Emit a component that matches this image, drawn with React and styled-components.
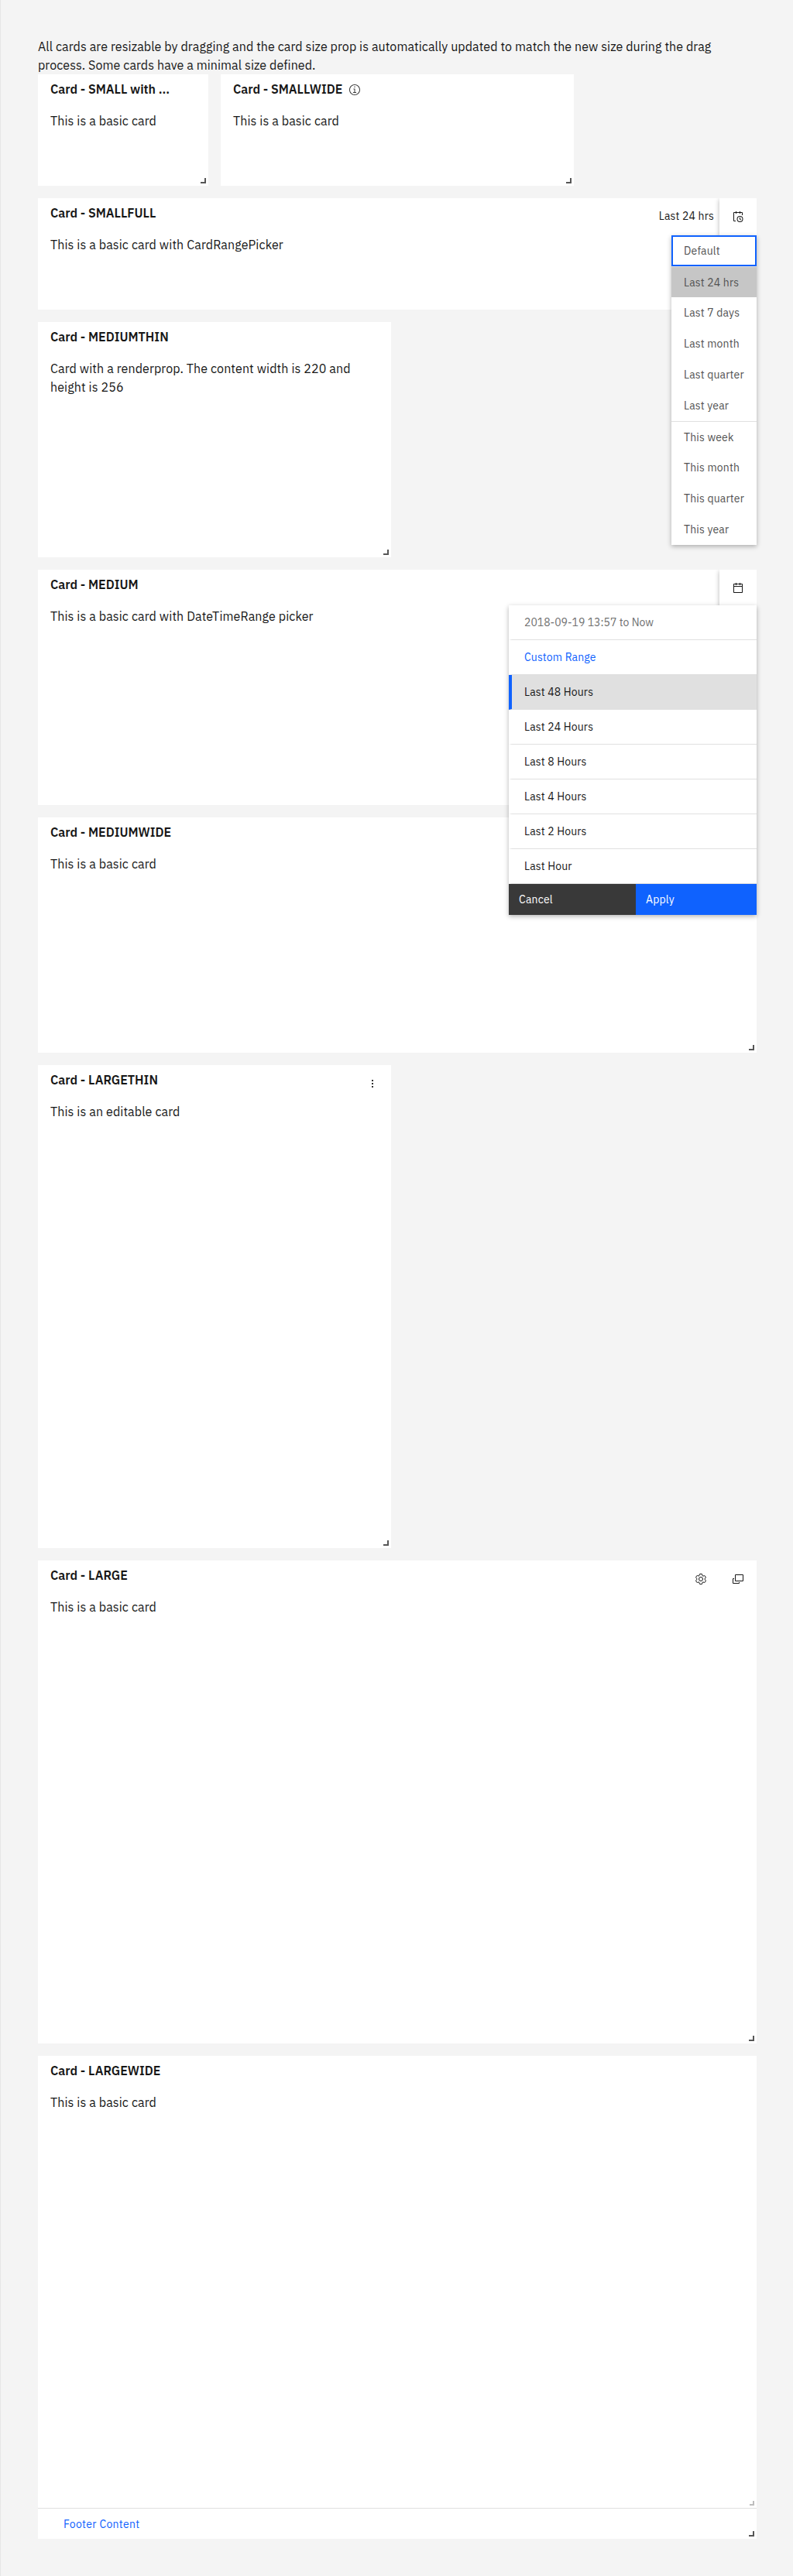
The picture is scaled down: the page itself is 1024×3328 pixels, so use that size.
import React from 'react';
import styled, { createGlobalStyle } from 'styled-components';

const GlobalStyle = createGlobalStyle`
  *, *::before, *::after { box-sizing: border-box; }
  body {
    margin: 0;
    background: #f4f4f4;
    color: #161616;
    font-family: "IBM Plex Sans", Roboto, "Liberation Sans", sans-serif;
    font-size: 16px;
    line-height: 24px;
  }
`;

const Page = styled.main`
  min-height: 3328px;
  padding: 48px 47px 48px 48px;
  border-left: 1px solid #e6e6e6;
`;

const Intro = styled.p`
  height: 48px;
  margin: 0;
`;

const IntroLine = styled.span`
  display: block;
  white-space: nowrap;
  letter-spacing: 0.083px;
`;

const Board = styled.div`
  display: flex;
  flex-wrap: wrap;
  gap: 16px;
`;

const CardBox = styled.section`
  position: relative;
  display: flex;
  flex-direction: column;
  width: ${(p) => p.$width}px;
  height: ${(p) => p.$height}px;
  background: #fff;
`;

const CardHeader = styled.header`
  display: flex;
  flex: none;
  justify-content: space-between;
  height: 48px;
  padding-left: 16px;
`;

const Title = styled.h2`
  display: flex;
  align-items: center;
  gap: 8px;
  height: 38px;
  margin: 0;
  font-size: 16px;
  font-weight: 600;
  white-space: nowrap;

  svg { margin-top: 2px; }
`;

const CardBody = styled.div`
  flex: 1;
  padding: 0 16px 16px;
  letter-spacing: 0.11px;
`;

const CardFooter = styled.footer`
  display: flex;
  align-items: center;
  height: 40px;
  padding: 1px 33px 0;
  border-top: 1px solid #e0e0e0;
`;

const FooterLink = styled.a`
  color: #0f62fe;
  font-size: 14px;
  letter-spacing: 0.32px;
`;

const Toolbar = styled.div`
  display: flex;
  align-items: center;
`;

const RangeLabel = styled.span`
  margin-right: 7px;
  padding-bottom: 2px;
  font-size: 14px;
  letter-spacing: 0.16px;
`;

const ToolButton = styled.button`
  display: flex;
  align-items: center;
  justify-content: center;
  width: 48px;
  height: 48px;
  padding: 0;
  border: 0;
  background: #fff;
  color: #161616;
  box-shadow: ${(p) => (p.$open ? '0 2px 6px rgba(0, 0, 0, 0.3)' : 'none')};
  clip-path: ${(p) => (p.$open ? 'inset(0 0 0 -8px)' : 'none')};
`;

const ResizeHandle = styled.span`
  position: absolute;
  right: 3px;
  bottom: ${(p) => p.$bottom || 3}px;
  width: ${(p) => (p.$faint ? 6 : 7)}px;
  height: ${(p) => (p.$faint ? 6 : 7)}px;
  border: solid ${(p) => (p.$faint ? '#bdbdbd' : '#565656')};
  border-width: 0 2px 2px 0;
`;

const Menu = styled.ul`
  position: absolute;
  z-index: 2;
  top: 48px;
  right: 0;
  width: 110px;
  margin: 0;
  padding: 0;
  list-style: none;
  background: #fff;
  box-shadow: 0 2px 6px rgba(0, 0, 0, 0.3);
`;

const MenuItem = styled.li`
  display: flex;
  align-items: center;
  height: 40px;
  padding-left: ${(p) => (p.$focused ? 14 : 16)}px;
  border: ${(p) => (p.$focused ? '2px solid #0f62fe' : '0')};
  border-top: ${(p) => (p.$divided ? '1px solid #e0e0e0' : p.$focused ? '2px solid #0f62fe' : '0')};
  background: ${(p) => (p.$selected ? '#c6c6c6' : '#fff')};
  color: #525252;
  font-size: 14px;
  letter-spacing: 0.16px;
  white-space: nowrap;
`;

const RangePanel = styled.div`
  position: absolute;
  z-index: 2;
  top: 46px;
  right: 0;
  width: 320px;
  background: #fff;
  box-shadow: 0 2px 6px rgba(0, 0, 0, 0.3);
`;

const RangeOption = styled.div`
  display: flex;
  align-items: center;
  height: 45px;
  padding-left: 16px;
  border-left: 4px solid ${(p) => (p.$selected ? '#0f62fe' : 'transparent')};
  border-bottom: 1px solid #e0e0e0;
  background: ${(p) => (p.$selected ? '#e0e0e0' : '#fff')};
  color: ${(p) => p.$color || '#161616'};
  font-size: 14px;
  letter-spacing: ${(p) => p.$tracking ?? 0.15}px;
`;

const PanelActions = styled.div`
  display: flex;
  height: 40px;
`;

const PanelButton = styled.button`
  flex: ${(p) => (p.$primary ? '1' : '0 0 164px')};
  padding: 0 13px;
  border: 0;
  background: ${(p) => (p.$primary ? '#0f62fe' : '#393939')};
  color: #fff;
  font: 14px/18px "IBM Plex Sans", Roboto, sans-serif;
  letter-spacing: 0.2px;
  text-align: left;
`;

const InfoIcon = () => (
  <svg width="16" height="16" viewBox="0 0 16 16" fill="#393939">
    <path d="M8.5 11V6.5h-2v1h1V11H6v1h4v-1zM8 3.5c-.4 0-.8.3-.8.8S7.6 5 8 5s.8-.3.8-.8-.4-.7-.8-.7z" />
    <path d="M8 15c-3.9 0-7-3.1-7-7s3.1-7 7-7 7 3.1 7 7-3.1 7-7 7zM8 2C4.7 2 2 4.7 2 8s2.7 6 6 6 6-2.7 6-6-2.7-6-6-6z" />
  </svg>
);

const ScheduleIcon = () => (
  <svg width="16" height="16" viewBox="0 0 32 32" fill="currentColor">
    <path d="M21,30a8,8,0,1,1,8-8A8,8,0,0,1,21,30Zm0-14a6,6,0,1,0,6,6A6,6,0,0,0,21,16Z" />
    <path d="M22.59 25L20 22.41V18h2v3.59l2 2z" />
    <path d="M28,6a2,2,0,0,0-2-2H22V2H20V4H12V2H10V4H6A2,2,0,0,0,4,6V26a2,2,0,0,0,2,2h4V26H6V6h4V8h2V6h8V8h2V6h4v6h2Z" />
  </svg>
);

const CalendarIcon = () => (
  <svg width="16" height="16" viewBox="0 0 32 32" fill="currentColor">
    <path d="M26,4h-4V2h-2v2h-8V2h-2v2H6C4.9,4,4,4.9,4,6v20c0,1.1,0.9,2,2,2h20c1.1,0,2-0.9,2-2V6C28,4.9,27.1,4,26,4z M26,26H6V12h20V26z M26,10H6V6h4v2h2V6h8v2h2V6h4V10z" />
  </svg>
);

const OverflowIcon = () => (
  <svg width="16" height="16" viewBox="0 0 16 16" fill="#333">
    <rect x="7" y="3" width="2" height="2" />
    <rect x="7" y="7" width="2" height="2" />
    <rect x="7" y="11" width="2" height="2" />
  </svg>
);

const SettingsIcon = () => (
  <svg width="16" height="16" viewBox="0 0 16 16" fill="none" stroke="currentColor">
    <path d="M6.8 1.5h2.4a.5.5 0 0 1 .5.4l.3 1.7 1 .6 1.6-.6a.5.5 0 0 1 .6.2l1.2 2.1a.5.5 0 0 1-.1.6L13 7.5v1l1.3 1.1a.5.5 0 0 1 .1.6l-1.2 2.1a.5.5 0 0 1-.6.2l-1.6-.6-1 .6-.3 1.7a.5.5 0 0 1-.5.4H6.8a.5.5 0 0 1-.5-.4L6 12.5l-1-.6-1.6.6a.5.5 0 0 1-.6-.2l-1.2-2.1a.5.5 0 0 1 .1-.6L3 8.5v-1L1.7 6.4a.5.5 0 0 1-.1-.6l1.2-2.1a.5.5 0 0 1 .6-.2l1.6.6 1-.6.3-1.6a.5.5 0 0 1 .5-.4z" />
    <circle cx="8" cy="8" r="2.5" />
  </svg>
);

const PopupIcon = () => (
  <svg width="16" height="16" viewBox="0 0 32 32" fill="currentColor">
    <path d="M28,4H10A2,2,0,0,0,8,6V20a2,2,0,0,0,2,2H28a2,2,0,0,0,2-2V6A2,2,0,0,0,28,4Zm0,16H10V6H28Z" />
    <path d="M18,26H4V16H6V14H4a2,2,0,0,0-2,2V26a2,2,0,0,0,2,2H18a2,2,0,0,0,2-2V24H18Z" />
  </svg>
);

function Card({ title, info, width, height, tools, footer, overlay, children }) {
  return (
    <CardBox $width={width} $height={height}>
      <CardHeader>
        <Title>
          {title}
          {info && <InfoIcon />}
        </Title>
        <Toolbar>{tools}</Toolbar>
      </CardHeader>
      <CardBody>{children}</CardBody>
      {footer && <CardFooter>{footer}</CardFooter>}
      {footer && <ResizeHandle $faint $bottom={43} />}
      <ResizeHandle />
      {overlay}
    </CardBox>
  );
}

const periods = [
  { label: 'Default', focused: true },
  { label: 'Last 24 hrs', divided: true, selected: true },
  { label: 'Last 7 days' },
  { label: 'Last month' },
  { label: 'Last quarter' },
  { label: 'Last year' },
  { label: 'This week', divided: true },
  { label: 'This month' },
  { label: 'This quarter' },
  { label: 'This year' },
];

const PeriodMenu = () => (
  <Menu>
    {periods.map((p) => (
      <MenuItem key={p.label} $focused={p.focused} $selected={p.selected} $divided={p.divided}>
        {p.label}
      </MenuItem>
    ))}
  </Menu>
);

const presets = ['Last 48 Hours', 'Last 24 Hours', 'Last 8 Hours', 'Last 4 Hours', 'Last 2 Hours', 'Last Hour'];

const DateTimePanel = () => (
  <RangePanel>
    <RangeOption $color="#6f6f6f" $tracking={0}>2018-09-19 13:57 to Now</RangeOption>
    <RangeOption $color="#0f62fe">Custom Range</RangeOption>
    {presets.map((label, i) => (
      <RangeOption key={label} $selected={i === 0}>{label}</RangeOption>
    ))}
    <PanelActions>
      <PanelButton>Cancel</PanelButton>
      <PanelButton $primary>Apply</PanelButton>
    </PanelActions>
  </RangePanel>
);

export default function App() {
  return (
    <>
      <GlobalStyle />
      <Page>
        <Intro>
          <IntroLine>
            All cards are resizable by dragging and the card size prop is automatically updated to match the new size during the drag
          </IntroLine>
          <IntroLine>process. Some cards have a minimal size defined.</IntroLine>
        </Intro>
        <Board>
          <Card title="Card - SMALL with ..." width={220} height={144}>This is a basic card</Card>
          <Card title="Card - SMALLWIDE" info width={456} height={144}>This is a basic card</Card>
          <Card
            title="Card - SMALLFULL"
            width={928}
            height={144}
            tools={
              <>
                <RangeLabel>Last 24 hrs</RangeLabel>
                <ToolButton $open><ScheduleIcon /></ToolButton>
              </>
            }
            overlay={<PeriodMenu />}
          >
            This is a basic card with CardRangePicker
          </Card>
          <Card title="Card - MEDIUMTHIN" width={456} height={304}>
            Card with a renderprop. The content width is 220 and<br />height is 256
          </Card>
          <Card
            title="Card - MEDIUM"
            width={928}
            height={304}
            tools={<ToolButton $open><CalendarIcon /></ToolButton>}
            overlay={<DateTimePanel />}
          >
            This is a basic card with DateTimeRange picker
          </Card>
          <Card title="Card - MEDIUMWIDE" width={928} height={304}>This is a basic card</Card>
          <Card title="Card - LARGETHIN" width={456} height={624} tools={<ToolButton><OverflowIcon /></ToolButton>}>
            This is an editable card
          </Card>
          <Card
            title="Card - LARGE"
            width={928}
            height={624}
            tools={
              <>
                <ToolButton><SettingsIcon /></ToolButton>
                <ToolButton><PopupIcon /></ToolButton>
              </>
            }
          >
            This is a basic card
          </Card>
          <Card title="Card - LARGEWIDE" width={928} height={624} footer={<FooterLink>Footer Content</FooterLink>}>
            This is a basic card
          </Card>
        </Board>
      </Page>
    </>
  );
}
